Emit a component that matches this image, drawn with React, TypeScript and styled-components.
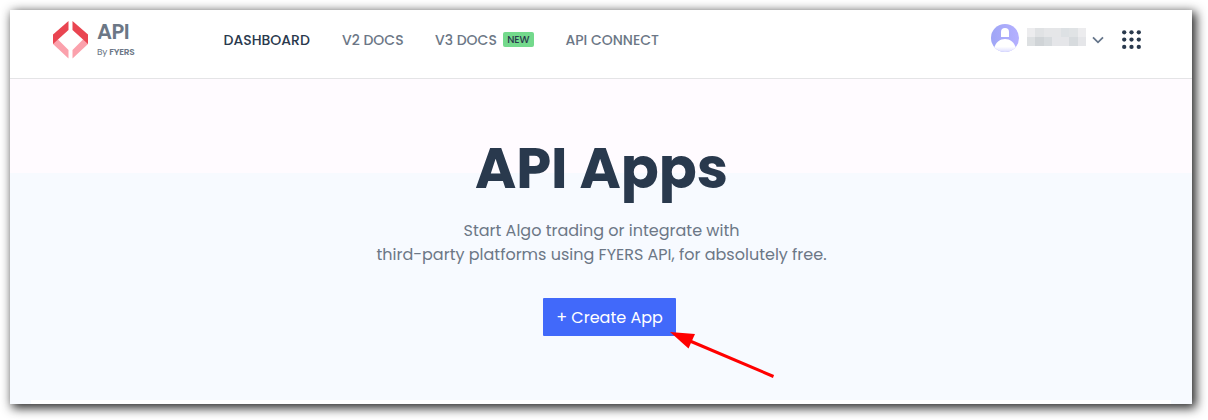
import React from 'react';
import styled, { createGlobalStyle } from 'styled-components';

const GlobalStyle = createGlobalStyle`
  * { box-sizing: border-box; }
  body {
    margin: 0;
    background: #fff;
    font-family: Poppins, Inter, sans-serif;
    color: #6c7786;
    overflow: hidden;
  }
`;

const Page = styled.div`
  height: 420px;
  padding: 10px 16px 16px 10px;
`;

const Window = styled.div`
  height: 394px;
  display: flex;
  flex-direction: column;
  background: #fff;
  box-shadow: 3px 3px 10px 1px rgba(0, 0, 0, 0.85);
`;

const Header = styled.header`
  height: 69px;
  flex: none;
  display: flex;
  align-items: flex-start;
  border-bottom: 1px solid #e4e4e6;
  padding-left: 43px;
  white-space: nowrap;
`;

const Brand = styled.div`
  display: flex;
  width: 170.5px;
  padding-top: 11px;
  gap: 9px;
`;

const BrandName = styled.div`
  font-size: 21px;
  line-height: 22px;
  font-weight: 600;
  letter-spacing: -0.5px;
`;

const BrandOwner = styled.div`
  margin-top: 3px;
  font-size: 9px;
  line-height: 12px;
  letter-spacing: -0.25px;
  b { font-weight: 600; }
`;

const Nav = styled.nav`
  display: flex;
  padding-top: 20px;
`;

const NavItem = styled.a<{ $width: number; $active?: boolean }>`
  display: flex;
  align-items: center;
  width: ${(p) => p.$width}px;
  height: 20px;
  font-size: 14px;
  font-weight: 500;
  color: ${(p) => (p.$active ? '#2a394d' : '#6c7786')};
`;

const NewBadge = styled.span`
  display: flex;
  align-items: center;
  justify-content: center;
  width: 31px;
  height: 15px;
  margin: -1px 0 0 6px;
  border-radius: 2px;
  background: #73d98c;
  color: #2a394d;
  font-size: 10px;
  font-weight: 500;
`;

const Account = styled.div`
  display: flex;
  align-items: center;
  margin-left: auto;
  padding: 14px 50px 0 0;
  height: 41px;
`;

const HiddenName = styled.div`
  display: grid;
  grid-template-columns: 8px 9px 8px 9px 8px 9px 8px;
  grid-template-rows: 9px 9px;
  margin: 0 6px 2px 8px;
`;

const Tile = styled.span<{ $color: string }>`
  background: ${(p) => p.$color};
`;

const Chevron = styled.svg`
  margin-top: 4px;
`;

const AppsIcon = styled.svg`
  margin: 4px 0 0 18px;
`;

const Hero = styled.main`
  flex: 1;
  display: flex;
  flex-direction: column;
  align-items: center;
  padding-top: 60px;
  padding-left: 1px;
  background: linear-gradient(#fffbff 0 94px, #f7faff 94px);
`;

const Title = styled.h1`
  margin: 0;
  font-size: 56px;
  line-height: 60px;
  font-weight: 700;
  color: #29394d;
`;

const Lead = styled.p`
  margin: 20px 0 0;
  text-align: center;
  font-size: 16px;
  line-height: 24px;
  white-space: nowrap;
`;

const CreateButton = styled.button`
  position: relative;
  width: 133px;
  height: 38px;
  margin: 31px 0 0 15px;
  padding: 0 0 0 1px;
  border: 0;
  border-radius: 1px;
  background: #4169fa;
  color: #fff;
  font: 400 16px Poppins, Inter, sans-serif;
  white-space: nowrap;
`;

const Arrow = styled.svg`
  position: absolute;
  left: 127px;
  top: 32px;
`;

const NextSection = styled.div`
  width: 1140px;
  height: 4px;
  margin: auto 1px 0 0;
  background: #fff;
`;

const tiles = [
  '#ececee', '#e0e2e4', '#e5e6e8', '#e5e6e8', '#dde1e4', '#e0e3e5', '#ececee',
  '#dde0e2', '#d0d4d7', '#d7dbde', '#e5e6e9', '#e5e6e9', '#d7dbde', '#e5e6e9',
];

export default function App() {
  return (
    <>
      <GlobalStyle />
      <Page>
        <Window>
          <Header>
            <Brand>
              <svg width="35" height="38" viewBox="0 0 35 38">
                <path d="M0 23 V18.5L5 18.5 15.5 29V37.5z" fill="#fba1ac" />
                <path d="M35 23V18.5L30 18.5 19.5 29V37.5z" fill="#fba1ac" />
                <path d="M15.5 0v9L0 23V13.5z" fill="#e94551" />
                <path d="M19.5 0v9L35 23V13.5z" fill="#e94551" />
              </svg>
              <div>
                <BrandName>API</BrandName>
                <BrandOwner>By <b>FYERS</b></BrandOwner>
              </div>
            </Brand>
            <Nav>
              <NavItem $width={118.5} $active>DASHBOARD</NavItem>
              <NavItem $width={93}>V2 DOCS</NavItem>
              <NavItem $width={130.5}>V3 DOCS<NewBadge>NEW</NewBadge></NavItem>
              <NavItem $width={100}>API CONNECT</NavItem>
            </Nav>
            <Account>
              <svg width="28" height="28" viewBox="0 0 28 28">
                <defs>
                  <linearGradient id="avatar" x2="1" y2="0">
                    <stop stopColor="#9fa6f6" />
                    <stop offset="1" stopColor="#b5b0ff" />
                  </linearGradient>
                  <linearGradient id="body" x2="0" y2="1">
                    <stop offset=".6" stopColor="#fff" />
                    <stop offset="1" stopColor="#dcdcff" />
                  </linearGradient>
                  <clipPath id="circle"><circle cx="14" cy="14" r="14" /></clipPath>
                </defs>
                <g clipPath="url(#circle)">
                  <rect width="28" height="28" fill="url(#avatar)" />
                  <path d="M10 13V8a4 4 0 0 1 8 0v5z" fill="#fff" />
                  <path d="M3 28v-4c2-6 6-9 11-9s9 3 11 9v4z" fill="url(#body)" />
                </g>
              </svg>
              <HiddenName>
                {tiles.map((color, i) => <Tile key={i} $color={color} />)}
              </HiddenName>
              <Chevron width="12" height="8" viewBox="0 0 12 8">
                <path d="m1 1.3 5 5 5-5" fill="none" stroke="#65758a" strokeWidth="1.8" />
              </Chevron>
              <AppsIcon width="20" height="20" viewBox="0 0 20 20" fill="#29394d">
                {[2.3, 9.6, 16.9].map((y) =>
                  [2.2, 9.5, 16.8].map((x) => <circle key={`${x}-${y}`} cx={x} cy={y} r="2.15" />),
                )}
              </AppsIcon>
            </Account>
          </Header>
          <Hero>
            <Title>API Apps</Title>
            <Lead>
              Start Algo trading or integrate with
              <br />
              third-party platforms using FYERS API, for absolutely free.
            </Lead>
            <CreateButton>
              + Create App
              <Arrow width="106" height="50" viewBox="0 0 106 50">
                <path d="M20 11 103.5 46.5" stroke="#f00" strokeWidth="3" />
                <path d="M0 2 25 4 18.5 18.5z" fill="#f00" />
              </Arrow>
            </CreateButton>
            <NextSection />
          </Hero>
        </Window>
      </Page>
    </>
  );
}
